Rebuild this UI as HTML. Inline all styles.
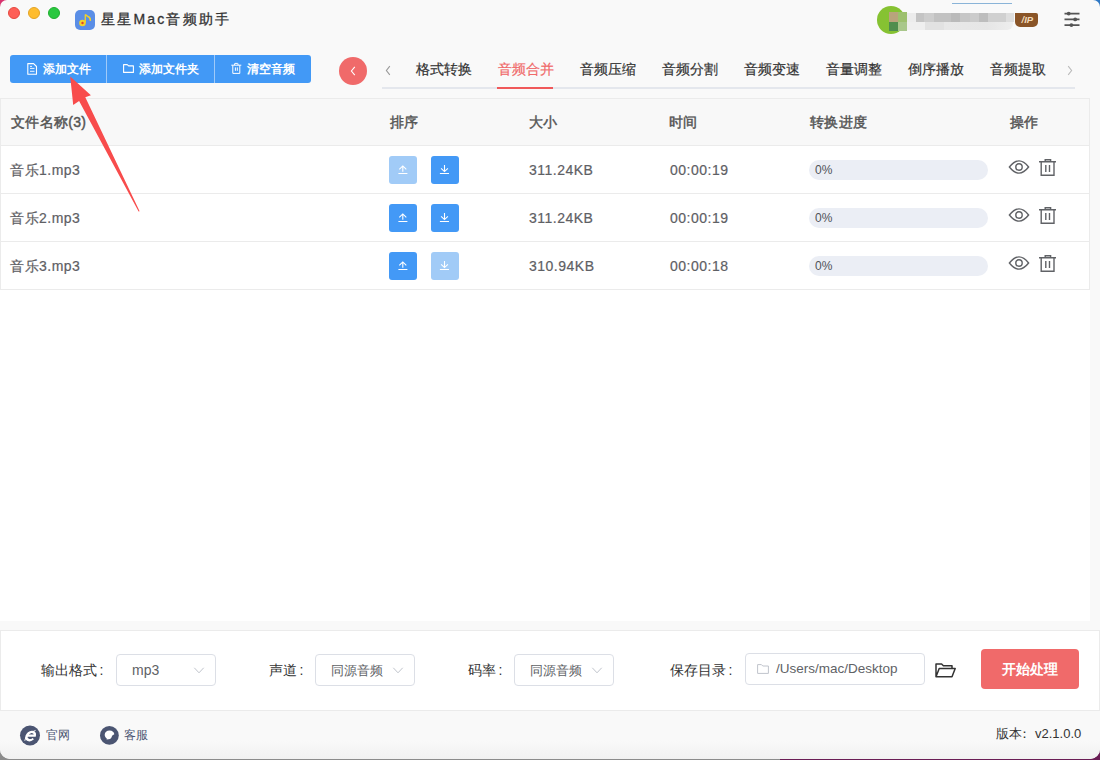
<!DOCTYPE html>
<html><head><meta charset="utf-8">
<style>
*{box-sizing:border-box;margin:0;padding:0}
html,body{width:1100px;height:760px;overflow:hidden;background:#9c9ca4}
body{font-family:"Liberation Sans",sans-serif;position:relative;color:#333}
.bgc{position:absolute}
.win{position:absolute;left:0;top:0;width:1100px;height:759px;background:#f9f9f9;border-radius:7px 7px 10px 10px;overflow:hidden}
.abs{position:absolute}
svg{position:absolute;overflow:visible}
.tl{position:absolute;top:7px;width:12px;height:12px;border-radius:50%}
.title{position:absolute;left:101px;top:10px;font-size:14px;font-weight:normal;-webkit-text-stroke:0.3px currentColor;letter-spacing:2.2px;color:#333;line-height:18px;white-space:nowrap}
.btns{position:absolute;left:10px;top:55px;width:301px;height:28px;background:#4299f6;border-radius:3px}
.btns .b{position:absolute;top:0;height:28px;color:#fff;font-size:12px;font-weight:bold;line-height:28px;white-space:nowrap}
.btns .sep{position:absolute;top:0;width:1px;height:28px;background:#9fcaf9}
.tab{position:absolute;top:59px;font-size:14px;line-height:20px;color:#333;font-weight:normal;-webkit-text-stroke:0.2px currentColor;white-space:nowrap}
.tabline{position:absolute;left:382px;top:87px;width:693px;height:2px;background:#e4e7ed}
.table{position:absolute;left:0;top:98px;width:1090px;height:192px;background:#fff;border:1px solid #ebebeb}
.row{position:absolute;left:0;width:1088px;height:48px;border-bottom:1px solid #ebebeb}
.hdr{background:#f8f8f8}
.cell{position:absolute;font-size:14px;line-height:20px;color:#5e6064;white-space:nowrap;letter-spacing:0.5px;-webkit-text-stroke:0.2px currentColor}
.hdr .cell{font-weight:normal;color:#555;letter-spacing:0.3px;-webkit-text-stroke:0.45px currentColor}
.sbtn{position:absolute;top:10px;width:28px;height:28px;border-radius:3px;background:#4399f6}
.sbtn.dis{background:#a1cbf7}
.prog{position:absolute;left:808px;top:14px;width:179px;height:20px;border-radius:10px;background:#ebeef5}
.prog span{position:absolute;left:6px;top:2px;font-size:12px;line-height:16px;color:#505358}
.empty{position:absolute;left:0;top:290px;width:1090px;height:331px;background:#fff}
.panel{position:absolute;left:0;top:630px;width:1100px;height:81px;background:#fff;border:1px solid #ebebeb}
.lbl{position:absolute;top:29px;font-size:14px;line-height:20px;color:#333;white-space:nowrap}
.sel{position:absolute;top:23px;width:100px;height:32px;border:1px solid #dcdfe6;border-radius:4px;background:#fff}
.sel span{position:absolute;left:15px;top:5px;font-size:13.5px;line-height:20px;color:#606266}
.footer{position:absolute;left:0;top:711px;width:1100px;height:49px;background:linear-gradient(#f9f9f9 60%,#f1f1f1)}
.ft{position:absolute;font-size:12px;line-height:18px;white-space:nowrap}
</style></head><body>
<div class="bgc" style="left:0;top:0;width:30px;height:30px;background:#d8336f"></div>
<div class="bgc" style="left:1070px;top:0;width:30px;height:30px;background:#2f78c4"></div>
<div class="bgc" style="left:780px;top:740px;width:320px;height:20px;background:#6a1d55"></div>
<div class="bgc" style="left:0;top:740px;width:780px;height:20px;background:#8c8c8c"></div>
<div class="win">
  <div class="tl" style="left:8px;background:#fe5f57;border:1px solid #e5483f"></div>
  <div class="tl" style="left:28px;background:#febc2e;border:1px solid #e3a324"></div>
  <div class="tl" style="left:48px;background:#2ac840;border:1px solid #1fae2e"></div>
  <div class="abs" style="left:75px;top:10px;width:20px;height:20px;border-radius:5px;background:#5a8ee6"></div>
  <svg style="left:75px;top:10px" width="20" height="20" viewBox="0 0 20 20">
    <path d="M10.3 4.5 L10.3 12.5" stroke="#f2d22a" stroke-width="1.3"/>
    <path d="M10.3 4.5 Q12 6 14.5 7.5 Q15.5 9 15.3 10.8" stroke="#f2d22a" stroke-width="1.6" fill="none"/>
    <circle cx="7.5" cy="13" r="3.3" fill="#f2d22a"/>
    <circle cx="7.5" cy="13" r="1.2" fill="#e0402a"/>
  </svg>
  <div class="title">星星Mac音频助手</div>

  <!-- user -->
  <div class="abs" style="left:952px;top:3px;width:60px;height:1px;background:#8ab4d8"></div>
  <div class="abs" style="left:877px;top:6px;width:28px;height:28px;border-radius:50%;background:#86c232"></div>
  <div class="abs" style="left:889px;top:12px;width:9px;height:10px;background:#b9a47c"></div>
  <div class="abs" style="left:898px;top:12px;width:9px;height:10px;background:#9dc06e"></div>
  <div class="abs" style="left:889px;top:22px;width:9px;height:9px;background:#4f8e4e"></div>
  <div class="abs" style="left:898px;top:22px;width:9px;height:9px;background:#a9c78b"></div>
  <div class="abs" style="left:907px;top:13px;width:107px;height:9px;background:linear-gradient(90deg,#ececec 0,#ececec 9px,#c4c4c4 9px,#c4c4c4 17px,#cdcdcd 17px,#cdcdcd 27px,#c2c2c2 27px,#c2c2c2 44px,#bababa 44px,#bababa 53px,#c6c6c6 53px,#c6c6c6 63px,#cbcbcb 63px,#cbcbcb 72px,#bdbdbd 72px,#bdbdbd 81px,#d0d0d0 81px,#d0d0d0 99px,#dedede 99px)"></div>
  <div class="abs" style="left:907px;top:22px;width:106px;height:8px;border-radius:0 0 6px 0;background:linear-gradient(90deg,#efefef 0,#efefef 18px,#e2e2e2 18px,#e2e2e2 37px,#e8e8e8 37px,#e6e6e6 80px,#eeeeee 106px)"></div>
  <div class="abs" style="left:1015px;top:13px;width:23px;height:14px;background:#8a5528;border-radius:0 2px 5px 5px"></div>
  <div class="abs" style="left:1021.5px;top:15px;font-size:9.5px;line-height:10px;font-style:italic;font-weight:bold;color:#f3dcbc">/IP</div>

  <svg style="left:1062px;top:10px" width="20" height="20">
    <g stroke="#555" stroke-width="1.6">
      <line x1="2.5" y1="3.6" x2="17.5" y2="3.6"/>
      <line x1="2.5" y1="9.4" x2="17.5" y2="9.4"/>
      <line x1="2.5" y1="15.1" x2="17.5" y2="15.1"/>
    </g>
    <g fill="#555"><circle cx="6.7" cy="3.6" r="1.9"/><circle cx="13.2" cy="9.4" r="1.9"/><circle cx="9.4" cy="15.1" r="1.9"/></g>
  </svg>

  <div class="btns">
    <svg style="left:17px;top:8px" width="11" height="12" viewBox="0 0 11 12">
      <path d="M0.8 0.6 H6.6 L9.5 3.5 V11.2 H0.8 Z" fill="none" stroke="#fff" stroke-width="1.1" stroke-linejoin="round"/>
      <path d="M3 3.4 H5 M3 5.4 H7.5 M3 8.3 H7.5" stroke="#fff" stroke-width="0.9"/>
    </svg>
    <div class="b" style="left:33px">添加文件</div>
    <svg style="left:112.6px;top:9px" width="11" height="9" viewBox="0 0 11 9">
      <path d="M0.6 0.6 H4.2 L5.6 1.9 H10.4 V8.4 H0.6 Z" fill="none" stroke="#fff" stroke-width="1.1" stroke-linejoin="round"/>
    </svg>
    <div class="b" style="left:129px">添加文件夹</div>
    <svg style="left:221px;top:8px" width="11" height="11" viewBox="0 0 11 11">
      <path d="M0.3 2.2 H10.3 M1.8 2.2 V10.4 H8.8 V2.2 M3.6 2.2 V0.8 Q3.6 0.4 4 0.4 H6.6 Q7 0.4 7 0.8 V2.2 M4.4 4.4 V7.8 M6.3 4.4 V7.8" fill="none" stroke="#fff" stroke-width="1"/>
    </svg>
    <div class="b" style="left:237px">清空音频</div>
    <div class="sep" style="left:96px"></div>
    <div class="sep" style="left:204px"></div>
  </div>


  <div class="abs" style="left:339px;top:57px;width:28px;height:28px;border-radius:50%;background:#f06a6a"></div>
  <svg style="left:339px;top:57px" width="28" height="28"><path d="M15.8 9.8 L12.4 14 L15.8 18.2" fill="none" stroke="#fff" stroke-width="1.1"/></svg>
  <svg style="left:380px;top:60px" width="14" height="20"><path d="M9.8 6.2 L6.4 10.5 L9.8 14.8" fill="none" stroke="#999" stroke-width="1.1"/></svg>
  <svg style="left:1062.5px;top:60px" width="14" height="20"><path d="M5.2 6.2 L8.6 10.5 L5.2 14.8" fill="none" stroke="#bbb" stroke-width="1.1"/></svg>

  <div class="tab" style="left:416px">格式转换</div>
  <div class="tab" style="left:498px;color:#f06a6a">音频合并</div>
  <div class="tab" style="left:580px">音频压缩</div>
  <div class="tab" style="left:662px">音频分割</div>
  <div class="tab" style="left:744px">音频变速</div>
  <div class="tab" style="left:826px">音量调整</div>
  <div class="tab" style="left:908px">倒序播放</div>
  <div class="tab" style="left:990px">音频提取</div>
  <div class="tabline"></div>
  <div class="abs" style="left:497px;top:87px;width:56px;height:2px;background:#f0595a"></div>

  <div class="table">
    <div class="row hdr" style="top:0;height:47px">
      <div class="cell" style="left:10px;top:13px">文件名称(3)</div>
      <div class="cell" style="left:389px;top:13px">排序</div>
      <div class="cell" style="left:528px;top:13px">大小</div>
      <div class="cell" style="left:668px;top:13px">时间</div>
      <div class="cell" style="left:809px;top:13px">转换进度</div>
      <div class="cell" style="left:1009px;top:13px">操作</div>
    </div>
    <div class="row" style="top:47px" id="r1">
      <div class="cell" style="left:9px;top:14px">音乐1.mp3</div>
      <div class="sbtn dis" style="left:388px"><svg style="left:9px;top:9px" width="10" height="10" viewBox="0 0 10 10"><path d="M1.3 4.3 L4.8 0.9 L8.3 4.3 M4.8 1.1 V6.8 M0.4 8.5 H9.4" fill="none" stroke="#fff" stroke-width="1.1"/></svg></div>
      <div class="sbtn" style="left:430px"><svg style="left:9px;top:9px" width="10" height="10" viewBox="0 0 10 10"><path d="M1.1 3.4 L4.5 6.6 L7.9 3.4 M4.5 0 V6.4 M-0.1 8.5 H9" fill="none" stroke="#fff" stroke-width="1.1"/></svg></div>
      <div class="cell" style="left:528px;top:14px">311.24KB</div>
      <div class="cell" style="left:669px;top:14px">00:00:19</div>
      <div class="prog"><span>0%</span></div>
      <svg style="left:1007.3px;top:13.4px" width="22" height="16" viewBox="0 0 22 16"><path d="M1.4 8 Q11 -4.2 20.6 8 Q11 20.2 1.4 8 Z" fill="none" stroke="#606266" stroke-width="1.4"/><circle cx="11" cy="8" r="3.2" fill="none" stroke="#606266" stroke-width="1.4"/></svg>
      <svg style="left:1037.2px;top:12px" width="19" height="20" viewBox="0 0 19 20"><path d="M1 3.8 H18 M3.2 3.8 V17.2 H16 V3.8 M7.2 3.8 V1.7 H12.6 V3.8 M7.8 7 V14 M11.5 7 V14" fill="none" stroke="#606266" stroke-width="1.4"/></svg>

    </div>
    <div class="row" style="top:95px" id="r2">
      <div class="cell" style="left:9px;top:14px">音乐2.mp3</div>
      <div class="sbtn" style="left:388px"><svg style="left:9px;top:9px" width="10" height="10" viewBox="0 0 10 10"><path d="M1.3 4.3 L4.8 0.9 L8.3 4.3 M4.8 1.1 V6.8 M0.4 8.5 H9.4" fill="none" stroke="#fff" stroke-width="1.1"/></svg></div>
      <div class="sbtn" style="left:430px"><svg style="left:9px;top:9px" width="10" height="10" viewBox="0 0 10 10"><path d="M1.1 3.4 L4.5 6.6 L7.9 3.4 M4.5 0 V6.4 M-0.1 8.5 H9" fill="none" stroke="#fff" stroke-width="1.1"/></svg></div>
      <div class="cell" style="left:528px;top:14px">311.24KB</div>
      <div class="cell" style="left:669px;top:14px">00:00:19</div>
      <div class="prog"><span>0%</span></div>
      <svg style="left:1007.3px;top:13.4px" width="22" height="16" viewBox="0 0 22 16"><path d="M1.4 8 Q11 -4.2 20.6 8 Q11 20.2 1.4 8 Z" fill="none" stroke="#606266" stroke-width="1.4"/><circle cx="11" cy="8" r="3.2" fill="none" stroke="#606266" stroke-width="1.4"/></svg>
      <svg style="left:1037.2px;top:12px" width="19" height="20" viewBox="0 0 19 20"><path d="M1 3.8 H18 M3.2 3.8 V17.2 H16 V3.8 M7.2 3.8 V1.7 H12.6 V3.8 M7.8 7 V14 M11.5 7 V14" fill="none" stroke="#606266" stroke-width="1.4"/></svg>

    </div>
    <div class="row" style="top:143px;border-bottom:none" id="r3">
      <div class="cell" style="left:9px;top:14px">音乐3.mp3</div>
      <div class="sbtn" style="left:388px"><svg style="left:9px;top:9px" width="10" height="10" viewBox="0 0 10 10"><path d="M1.3 4.3 L4.8 0.9 L8.3 4.3 M4.8 1.1 V6.8 M0.4 8.5 H9.4" fill="none" stroke="#fff" stroke-width="1.1"/></svg></div>
      <div class="sbtn dis" style="left:430px"><svg style="left:9px;top:9px" width="10" height="10" viewBox="0 0 10 10"><path d="M1.1 3.4 L4.5 6.6 L7.9 3.4 M4.5 0 V6.4 M-0.1 8.5 H9" fill="none" stroke="#fff" stroke-width="1.1"/></svg></div>
      <div class="cell" style="left:528px;top:14px">310.94KB</div>
      <div class="cell" style="left:669px;top:14px">00:00:18</div>
      <div class="prog"><span>0%</span></div>
      <svg style="left:1007.3px;top:13.4px" width="22" height="16" viewBox="0 0 22 16"><path d="M1.4 8 Q11 -4.2 20.6 8 Q11 20.2 1.4 8 Z" fill="none" stroke="#606266" stroke-width="1.4"/><circle cx="11" cy="8" r="3.2" fill="none" stroke="#606266" stroke-width="1.4"/></svg>
      <svg style="left:1037.2px;top:12px" width="19" height="20" viewBox="0 0 19 20"><path d="M1 3.8 H18 M3.2 3.8 V17.2 H16 V3.8 M7.2 3.8 V1.7 H12.6 V3.8 M7.8 7 V14 M11.5 7 V14" fill="none" stroke="#606266" stroke-width="1.4"/></svg>

    </div>
  </div>
  <div class="empty"></div>

  <div class="panel">
    <div class="lbl" style="left:40px">输出格式<span style="margin-left:2.5px">:</span></div>
    <div class="sel" style="left:115px;top:23px"><span style="font-size:14px">mp3</span><svg style="left:77px;top:12px" width="12" height="8"><path d="M0.3 0.8 L5 5.8 L9.7 0.8" fill="none" stroke="#c0c4cc" stroke-width="1"/></svg></div>
    <div class="lbl" style="left:268px">声道<span style="margin-left:2.5px">:</span></div>
    <div class="sel" style="left:314px;top:23px"><span style="font-size:13px;top:5.5px;left:15px">同源音频</span><svg style="left:77px;top:12px" width="12" height="8"><path d="M0.3 0.8 L5 5.8 L9.7 0.8" fill="none" stroke="#c0c4cc" stroke-width="1"/></svg></div>
    <div class="lbl" style="left:467px">码率<span style="margin-left:2.5px">:</span></div>
    <div class="sel" style="left:513px;top:23px"><span style="font-size:13px;top:5.5px;left:15px">同源音频</span><svg style="left:77px;top:12px" width="12" height="8"><path d="M0.3 0.8 L5 5.8 L9.7 0.8" fill="none" stroke="#c0c4cc" stroke-width="1"/></svg></div>
    <div class="lbl" style="left:669px">保存目录<span style="margin-left:2.5px">:</span></div>
    <div class="abs" style="left:744px;top:22px;width:180px;height:32px;border:1px solid #dcdfe6;border-radius:4px;background:#fff"><span style="position:absolute;left:30px;top:5px;font-size:13.5px;line-height:20px;color:#606266;white-space:nowrap">/Users/mac/Desktop</span><svg style="left:11px;top:10px" width="12" height="10" viewBox="0 0 12 10"><path d="M0.6 0.6 H4.4 L5.8 2 H11.4 V9.4 H0.6 Z" fill="none" stroke="#c0c4cc" stroke-width="1"/></svg></div>
    <svg style="left:934px;top:32px" width="21" height="15" viewBox="0 0 21 15"><path d="M1 13.8 V1 H6.6 L8.4 2.8 H17 V5.6 M1 13.8 L4.2 5.6 H20.2 L17 13.8 Z" fill="none" stroke="#333" stroke-width="1.5" stroke-linejoin="round"/></svg>
    <div class="abs" style="left:980px;top:18px;width:98px;height:40px;border-radius:4px;background:#f06a6a;color:#fff;font-size:14px;font-weight:bold;line-height:40px;text-align:center">开始处理</div>
  </div>

  <div class="footer">
  </div>
  <svg style="left:20px;top:725px" width="20" height="21" viewBox="0 0 20 21"><circle cx="10" cy="10.5" r="10" fill="#4b5572"/><g transform="translate(10.6 10.6) skewX(-14)"><path d="M-3.6 0 H4.2 A4 3.8 0 0 0 -3.8 0.2 A4 3.8 0 0 0 3.4 3" fill="none" stroke="#fff" stroke-width="2.3"/></g><path d="M4.8 15.8 Q5.5 9 15.6 5.4" fill="none" stroke="#fff" stroke-width="0.9"/></svg>
  <svg style="left:100px;top:726px" width="19" height="19" viewBox="0 0 19 19"><circle cx="9.4" cy="9.4" r="9.4" fill="#4b5572"/><path d="M9.6 4.6 C12.4 4.6 14.2 6.4 14.3 8.3 L12.3 9.6 L11.2 12.1 C10.5 12.9 9.6 13.3 8.6 13.3 L6.6 13.5 L6.8 12.4 C5.4 11.6 4.7 10.2 4.7 8.8 C4.7 6.4 6.6 4.6 9.6 4.6 Z" fill="#fff"/></svg>
  <div class="ft" style="left:46px;top:726px;color:#4b5572">官网</div>
  <div class="ft" style="left:124px;top:726px;color:#4b5572">客服</div>
  <div class="ft" style="left:996px;top:725px;color:#333;font-size:13px">版本<span style="position:relative;left:-4px">：</span>v2.1.0.0</div>
  <svg style="left:0;top:0" width="1100" height="760">
    <path d="M70.2 76.6 L90.9 95.3 L85.3 97.3 L139.6 211.2 L138.6 211.4 L79.1 100.9 L73.2 104.9 Z" fill="#f84c4c"/>
  </svg>
</div>
</body></html>
